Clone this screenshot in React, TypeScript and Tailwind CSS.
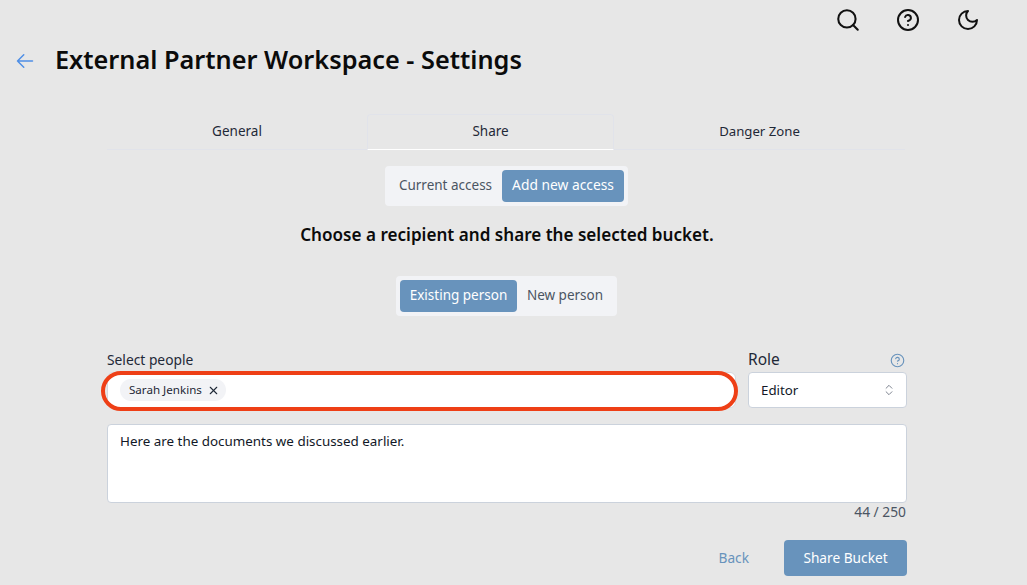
import { Search, CircleHelp, X, ChevronsUpDown } from "lucide-react";

export default function App() {
  return (
    <div className="h-[585px] w-[1027px] overflow-hidden bg-[#e7e7e7] text-[#111827] font-['Noto_Sans','Lato',sans-serif]">
      <div className="flex h-10 items-center justify-end gap-[35px] pr-[47px] text-[#111]">
        <Search size={26} strokeWidth={1.9} />
        <CircleHelp size={24} strokeWidth={2} />
        <svg width="24" height="24" viewBox="0 0 24 24" fill="none" stroke="currentColor" strokeWidth="2" strokeLinecap="round" strokeLinejoin="round" className="ml-px">
          <path d="M12 3a6 6 0 0 0 9 9 9 9 0 1 1-9-9Z" />
        </svg>
      </div>
      <div className="flex h-10 items-center pl-[15px]">
        <svg width="20" height="20" viewBox="0 0 24 24" fill="none" stroke="#4f8fe6" strokeWidth="1.8" strokeLinecap="round" strokeLinejoin="round" className="mt-[2px]">
          <path d="M10.5 19.5 3 12m0 0 7.5-7.5M3 12h18" />
        </svg>
        <h1 className="ml-5 pb-[2px] text-[25.3px] font-semibold leading-10 text-[#0b0b0b]">External Partner Workspace - Settings</h1>
      </div>
      <div className="ml-[107px] mt-[34px] w-[800px]">
        <div className="flex h-9 w-[798px] border-b border-[#e1e3ea] text-[13.5px]">
          <div className="flex w-[260px] items-center justify-center text-[#1f2937]">General</div>
          <div className="-mb-px flex w-[247px] items-center justify-center rounded-t border border-[#e1e3ea] border-b-white pb-[2px] text-[#1f2937]">Share</div>
          <div className="flex flex-1 items-center justify-center text-[13.2px] text-[#1f2937]">Danger Zone</div>
        </div>
        <div className="mt-4 flex justify-center pr-px">
          <div className="flex h-10 items-center rounded bg-[#f2f3f6] p-1 text-[13.5px]">
            <span className="flex h-8 w-[113px] items-center justify-center pb-px text-[#4b5563]">Current access</span>
            <span className="flex h-8 w-[122px] items-center justify-center rounded bg-[#6893bc] pb-px text-[13.8px] text-white">Add new access</span>
          </div>
        </div>
        <h2 className="mt-[17px] text-center text-[17.1px] font-semibold leading-6 text-[#0b0b0b]">Choose a recipient and share the selected bucket.</h2>
        <div className="mt-[29px] flex justify-center pr-px">
          <div className="flex h-10 items-center rounded bg-[#f2f3f6] p-1 text-[13.5px]">
            <span className="flex h-8 w-[117px] items-center justify-center rounded bg-[#6893bc] pb-px text-white">Existing person</span>
            <span className="flex h-8 w-[96px] items-center justify-center pb-px text-[#4b5563]">New person</span>
          </div>
        </div>
        <div className="mt-[30px] flex gap-3">
          <div className="w-[629px]">
            <label className="block h-[22px] text-[13.8px] leading-[28px] text-[#1f2937]">Select people</label>
            <div className="relative mt-1 flex h-9 items-center rounded-md border border-[#d5d9e0] bg-white pl-3">
              <span className="flex h-[22px] items-center gap-[5px] rounded-full bg-[#f2f3f6] pl-[9px] pr-[6px] text-[11.6px] text-[#1f2937]">
                Sarah Jenkins
                <X size={13} strokeWidth={2} />
              </span>
              <div className="pointer-events-none absolute -bottom-[4px] -left-[7px] -right-[3px] -top-[2px] rounded-[20px] border-4 border-[#ee3f16]" />
            </div>
          </div>
          <div className="flex-1">
            <div className="flex h-[22px] items-center justify-between pr-[2px] pt-[6px]">
              <label className="text-[15.5px] text-[#1f2937]">Role</label>
              <CircleHelp size={15} strokeWidth={1.8} className="text-[#6893bc]" />
            </div>
            <div className="mt-1 flex h-9 items-center justify-between rounded border border-[#cbd2dc] bg-white pl-3 pr-[10px] text-[13.3px] text-[#111827]">
              <span className="pt-px">Editor</span>
              <ChevronsUpDown size={14} strokeWidth={1.5} className="text-[#6b7280]" />
            </div>
          </div>
        </div>
        <div className="mt-4 h-[79px] rounded border border-[#cbd2dc] bg-white px-3 py-[6px] text-[13.4px] leading-5 text-[#111827]">
          Here are the documents we discussed earlier.
        </div>
        <div className="-mt-px pr-px text-right text-[13.8px] leading-5 text-[#4b5563]">44 / 250</div>
        <div className="mt-[18px] flex items-center justify-end gap-[35px] text-[13.7px]">
          <span className="text-[#6893bc]">Back</span>
          <span className="flex h-9 w-[123px] items-center justify-center rounded bg-[#6893bc] text-white">Share Bucket</span>
        </div>
      </div>
    </div>
  );
}
